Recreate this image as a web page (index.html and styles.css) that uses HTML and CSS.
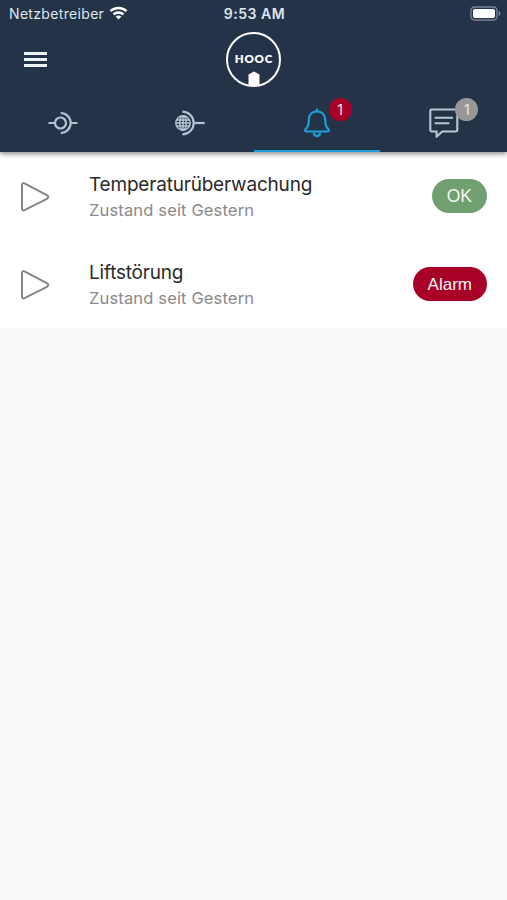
FILE: index.html
```html
<!DOCTYPE html>
<html lang="de">
<head>
    <meta charset="UTF-8">
    <meta name="viewport" content="width=device-width, initial-scale=1.0">
    <title>HOOC</title>
    <link rel="stylesheet" href="styles.css">
</head>
<body>

    <header class="header">
        <div class="status-bar">
            <div class="carrier">
                <span>Netzbetreiber</span>
                <svg class="wifi" width="19" height="14" viewBox="0 0 18 14" fill="none" stroke="#fff" stroke-width="2.5">
                    <path d="M1 5.2C5.4 .8 12.6 .8 17 5.2"/>
                    <path d="M4 8.4c2.8-2.7 7.2-2.7 10 0"/>
                    <path d="M6.2 10.500c1.600-1.400 4-1.400 5.600 0L9 13.600z" fill="#fff" stroke="none"/>
                </svg>
            </div>
            <div class="clock">9:53 AM</div>
            <svg class="battery" width="31" height="15" viewBox="0 0 31 15">
                <rect x="1" y="1" width="26" height="13" rx="3.6" fill="none" stroke="#7b8494" stroke-width="1.3"/>
                <rect x="3" y="3" width="22" height="9" rx="1.8" fill="#fff"/>
                <path d="M28.600 5v5c1.200-.4 1.800-1.300 1.800-2.500s-.6-2.100-1.800-2.500z" fill="#7b8494"/>
            </svg>
        </div>

        <div class="toolbar">
            <button class="menu-button" aria-label="Menu">
                <span></span>
                <span></span>
                <span></span>
            </button>
            <div class="logo">
                <span class="logo-name">HOOC</span>
                <svg class="logo-door" width="12" height="14" viewBox="0 0 12 14">
                    <path d="M.5 14V3.500L6 .5l5.500 3V14z" fill="#fff"/>
                </svg>
            </div>
        </div>

        <nav class="tabs">
            <a class="tab">
                <svg class="tab-icon" width="32" height="28" viewBox="0 0 32 28" fill="none" stroke="#b4c3d4" stroke-width="2.2">
                    <path d="M1.500 14H8M23.500 14h7"/>
                    <circle cx="13.500" cy="14" r="5.500"/>
                    <path d="M13.700 4a10 10 0 0 1 0 20"/>
                </svg>
            </a>
            <a class="tab">
                <svg class="tab-icon" width="32" height="28" viewBox="0 0 32 28" fill="none" stroke="#b4c3d4" stroke-width="2.2">
                    <path d="M20.500 14h10.200"/>
                    <path d="M8.400 2.700a11.300 11.300 0 0 1 0 22.600"/>
                    <g stroke-width="1.500">
                        <circle cx="9" cy="14" r="7.200"/>
                        <ellipse cx="9" cy="14" rx="3.300" ry="7.200"/>
                        <path d="M9 6.800v14.400M2.600 11h12.800M1.800 14h14.400M2.600 17h12.800"/>
                    </g>
                </svg>
            </a>
            <a class="tab active">
                <svg class="tab-icon" width="30" height="32" viewBox="0 0 30 32" fill="none" stroke="#1c9fd8" stroke-width="2.2" stroke-linejoin="round">
                    <path d="M15 4.300V1.500"/>
                    <path d="M15 4.300c-5 0-8.200 3.600-8.200 8.700 0 4.500-.7 6.700-3 8.900-1.200 1.200-.7 2.600.9 2.600h20.600c1.600 0 2.100-1.400.9-2.600-2.300-2.200-3-4.400-3-8.900 0-5.100-3.200-8.700-8.200-8.700z"/>
                    <path d="M11.800 25.500c.2 2.500 1.500 3.600 3.200 3.600s3-1.100 3.200-3.600"/>
                </svg>
                <span class="badge badge-red">1</span>
            </a>
            <a class="tab">
                <svg class="tab-icon" width="32" height="32" viewBox="0 0 32 32" fill="none" stroke="#b4c9d4" stroke-width="2.100" stroke-linejoin="round" stroke-linecap="round">
                    <path d="M3.700 2.500h24.200c.8 0 1.400.6 1.400 1.400v19.200c0 .8-.6 1.400-1.400 1.400H14.200l-5.600 5.300v-5.300H3.700c-.8 0-1.400-.6-1.400-1.400V3.900c0-.8.6-1.400 1.400-1.400z"/>
                    <path d="M7.500 10.800h16.700M7.500 16.300h13"/>
                </svg>
                <span class="badge badge-grey">1</span>
            </a>
        </nav>
    </header>

    <main class="list">
        <div class="list-item">
            <svg class="play" width="30" height="32" viewBox="0 0 30 32" fill="none" stroke="#868686" stroke-width="2" stroke-linejoin="round">
                <path d="M2 4v23.500c0 1.600 1.200 2.300 2.500 1.700l22.400-11.300c1.800-.9 1.800-2.900 0-3.800L4.500 2.400C3.200 1.700 2 2.400 2 4z"/>
            </svg>
            <div class="item-text">
                <div class="item-title">Temperaturüberwachung</div>
                <div class="item-subtitle">Zustand seit Gestern</div>
            </div>
            <span class="chip chip-ok">OK</span>
        </div>
        <div class="list-item">
            <svg class="play" width="30" height="32" viewBox="0 0 30 32" fill="none" stroke="#868686" stroke-width="2" stroke-linejoin="round">
                <path d="M2 4v23.500c0 1.600 1.200 2.300 2.500 1.700l22.400-11.300c1.800-.9 1.800-2.900 0-3.800L4.500 2.400C3.200 1.700 2 2.400 2 4z"/>
            </svg>
            <div class="item-text">
                <div class="item-title">Liftstörung</div>
                <div class="item-subtitle">Zustand seit Gestern</div>
            </div>
            <span class="chip chip-alarm">Alarm</span>
        </div>
    </main>

</body>
</html>
```

FILE: styles.css
```css
* {
    padding: 0;
    margin: 0;
    box-sizing: border-box;
}

body {
    min-height: 100vh;
    background-color: #fafafa;
    font-family: Inter, 'Liberation Sans', sans-serif;
}

.header {
    position: relative;
    height: 152px;
    background-color: #253349;
    box-shadow: 0 2px 5px rgba(0, 0, 0, 0.45);
}

/* Status bar */
.status-bar {
    display: grid;
    grid-template-columns: 1fr auto 1fr;
    align-items: center;
    height: 27px;
    padding: 0 7px 0 9px;
    color: #dfe5ec;
    font-size: 14px;
}

.carrier {
    display: flex;
    align-items: center;
    gap: 5px;
    letter-spacing: 0.33px;
}

.wifi {
    margin-top: -2px;
}

.clock {
    font-weight: 600;
    letter-spacing: 0.5px;
}

.battery {
    justify-self: end;
    margin-right: -1px;
}

/* Toolbar */
.toolbar {
    display: grid;
    grid-template-columns: 1fr auto 1fr;
    align-items: center;
    height: 65px;
    padding: 0 24px;
}

.menu-button {
    display: flex;
    flex-direction: column;
    gap: 3px;
    width: 23px;
    border: none;
    background: none;
    cursor: pointer;
}

.menu-button span {
    height: 3px;
    background-color: #edf2f5;
}

.logo {
    display: flex;
    flex-direction: column;
    align-items: center;
    justify-content: space-between;
    width: 55px;
    height: 55px;
    padding-top: 17px;
    border: 2px solid #fff;
    border-radius: 50%;
    color: #fff;
}

.logo-name {
    font-family: Lato, sans-serif;
    font-size: 11.5px;
    font-weight: 800;
    line-height: 16px;
    letter-spacing: 0.8px;
    margin-right: -0.8px;
}

/* Tabs */
.tabs {
    display: grid;
    grid-template-columns: repeat(4, 1fr);
    height: 60px;
}

.tab {
    position: relative;
    display: flex;
    align-items: center;
    justify-content: center;
    border-bottom: 2px solid transparent;
}

.tab-icon {
    margin-top: 3px;
}

.tab.active {
    border-bottom-color: #1c9fd8;
}

.badge {
    position: absolute;
    top: 6px;
    left: 75px;
    width: 23px;
    height: 23px;
    border-radius: 50%;
    color: #e6e6e6;
    font-size: 14px;
    line-height: 23px;
    text-align: center;
}

.badge-red {
    background-color: #a90028;
}

.badge-grey {
    background-color: #979797;
}

/* List */
.list {
    background-color: #fff;
}

.list-item {
    display: flex;
    align-items: center;
    height: 88px;
    padding: 0 20px;
}

.play {
    margin-top: 2px;
    margin-right: 39px;
}

.item-text {
    flex: 1;
    padding-top: 2px;
}

.item-title {
    color: #2b2b2b;
    font-size: 19px;
    line-height: 26px;
    letter-spacing: -0.2px;
}

.item-subtitle {
    color: #8a8a8a;
    font-size: 16.5px;
    line-height: 25px;
    letter-spacing: 0.15px;
}

.chip {
    height: 34px;
    padding: 0 15px;
    border-radius: 17px;
    color: #f5f5f5;
    font-family: 'Liberation Sans', Arial, sans-serif;
    font-size: 17.5px;
    line-height: 35px;
}

.chip-ok {
    background-color: #70a070;
}

.chip-alarm {
    background-color: #a90028;
    font-size: 17px;
}
```
